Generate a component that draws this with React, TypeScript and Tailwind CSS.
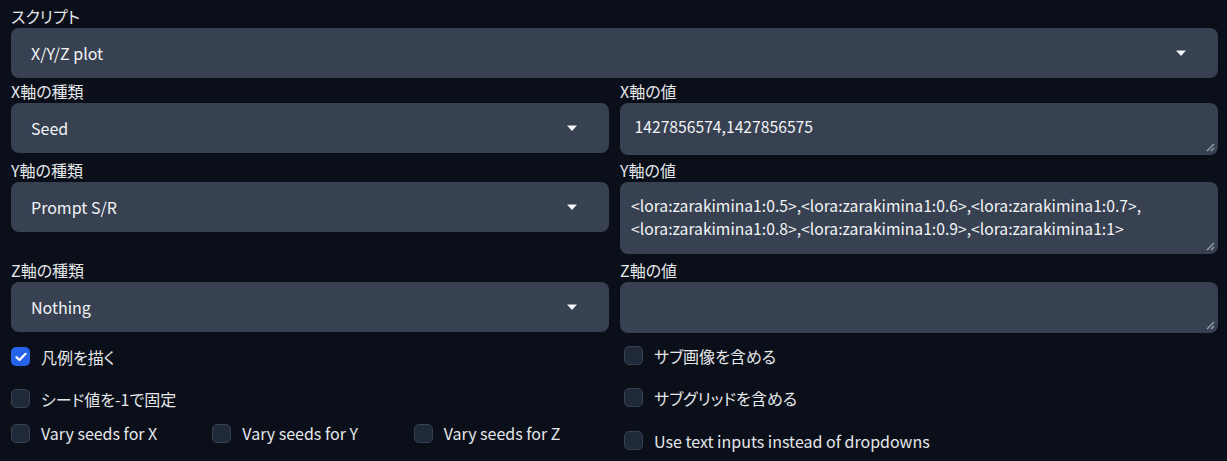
import React from "react";

const FONT = "font-['Noto_Sans_CJK_JP','Noto_Sans',sans-serif] [font-feature-settings:'palt']";

function Arrow() {
  return (
    <svg width="12" height="7" viewBox="0 0 12 7" className="shrink-0">
      <path d="M1 0.5 L11 0.5 L6 6 Z" fill="#f3f4f6" />
    </svg>
  );
}

function Resize() {
  return (
    <svg width="10" height="10" viewBox="0 0 10 10" className="absolute right-[3px] bottom-[3px]">
      <path d="M9 2 L2 9" stroke="#9ca3af" strokeWidth="1.3" />
      <path d="M9 6 L6 9" stroke="#9ca3af" strokeWidth="1.3" />
    </svg>
  );
}

function Label({ children }: { children: React.ReactNode }) {
  return <div className="h-[24px] leading-[24px] text-[16px] text-[#e5e7eb] pl-[11px]">{children}</div>;
}

function Dropdown({ label, value }: { label: string; value: string }) {
  return (
    <div className="flex flex-col">
      <Label>{label}</Label>
      <div className="ml-[11px] h-[50px] rounded-[8px] bg-[#374151] flex items-center justify-between pl-[20px] pr-[31px]">
        <span className="text-[16px] text-[#f3f4f6]">{value}</span>
        <Arrow />
      </div>
    </div>
  );
}

function TextArea({ label, lines, h }: { label: string; lines: string[]; h: string }) {
  return (
    <div className="flex flex-col">
      <div className="h-[24px] leading-[24px] text-[16px] text-[#e5e7eb]">{label}</div>
      <div className={`relative ${h} rounded-[8px] bg-[#374151] pl-[11px] pr-[10px] pt-[12px] text-[15.7px] leading-[23px] text-[#f3f4f6] whitespace-pre`}>
        {lines.map((l, i) => (
          <div key={i}>{l}</div>
        ))}
        <Resize />
      </div>
    </div>
  );
}

function Check({ label, checked = false }: { label: string; checked?: boolean }) {
  return (
    <div className="flex items-center gap-[11px]">
      <div
        className={`w-[19px] h-[19px] rounded-[5px] flex items-center justify-center ${
          checked ? "bg-[#2563eb]" : "bg-[#1f2937] border border-[#374151]"
        }`}
      >
        {checked && (
          <svg width="12" height="10" viewBox="0 0 12 10">
            <path d="M1.5 5.2 L4.5 8 L10.5 1.8" stroke="white" strokeWidth="2.2" fill="none" strokeLinecap="round" strokeLinejoin="round" />
          </svg>
        )}
      </div>
      <span className="text-[16px] text-[#e5e7eb]">{label}</span>
    </div>
  );
}

export default function App() {
  return (
    <div className={`w-[1227px] h-[461px] bg-[#0b0f19] overflow-hidden pt-[4px] ${FONT}`}>
      <div className="pr-[9px]">
        <Dropdown label="スクリプト" value="X/Y/Z plot" />
      </div>
      <div className="grid grid-cols-[609px_1fr] gap-x-[11px] pr-[9px] mt-[1px]">
        <Dropdown label="X軸の種類" value="Seed" />
        <TextArea label="X軸の値" lines={[" 1427856574,1427856575"]} h="h-[52px]" />
      </div>
      <div className="grid grid-cols-[609px_1fr] gap-x-[11px] pr-[9px] mt-[3px] items-start">
        <Dropdown label="Y軸の種類" value="Prompt S/R" />
        <TextArea
          label="Y軸の値"
          lines={[
            "<lora:zarakimina1:0.5>,<lora:zarakimina1:0.6>,<lora:zarakimina1:0.7>,",
            "<lora:zarakimina1:0.8>,<lora:zarakimina1:0.9>,<lora:zarakimina1:1>",
          ]}
          h="h-[72px]"
        />
      </div>
      <div className="grid grid-cols-[609px_1fr] gap-x-[11px] pr-[9px] mt-[4px] items-start">
        <Dropdown label="Z軸の種類" value="Nothing" />
        <TextArea label="Z軸の値" lines={[""]} h="h-[51px]" />
      </div>
      <div className="grid grid-cols-[609px_1fr] gap-x-[15px] pr-[9px] mt-[14px]">
        <div className="pl-[11px] flex flex-col">
          <div className="h-[19px] flex items-center"><Check label="凡例を描く" checked /></div>
          <div className="h-[19px] flex items-center mt-[23px]"><Check label="シード値を-1で固定" /></div>
          <div className="h-[19px] grid grid-cols-3 gap-x-[6px] mt-[13px]">
            <Check label="Vary seeds for X" />
            <Check label="Vary seeds for Y" />
            <Check label="Vary seeds for Z" />
          </div>
        </div>
        <div className="flex flex-col">
          <div className="h-[19px] flex items-center -mt-[1px]"><Check label="サブ画像を含める" /></div>
          <div className="h-[19px] flex items-center mt-[23px]"><Check label="サブグリッドを含める" /></div>
          <div className="h-[19px] flex items-center mt-[24px]"><Check label="Use text inputs instead of dropdowns" /></div>
        </div>
      </div>
    </div>
  );
}
